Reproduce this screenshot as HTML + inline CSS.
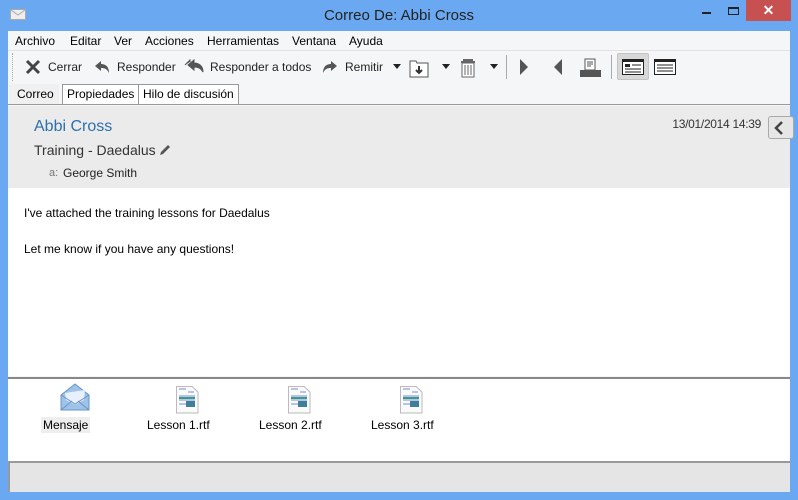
<!DOCTYPE html>
<html><head><meta charset="utf-8"><style>
*{margin:0;padding:0;box-sizing:border-box}
body{width:798px;height:500px;background:#6aa9f2;font-family:"Liberation Sans",sans-serif;font-size:12px;color:#000;position:relative;overflow:hidden}
.abs{position:absolute}
.title{left:0;top:0;width:798px;height:31px;text-align:center;font-size:15px;line-height:31px;color:#222}
.client{left:8px;top:31px;width:782px;height:461px;background:#f5f6f7}
.menu span{position:absolute;top:3px;font-size:12px}
.tb{font-size:12px;color:#222}
.tab{border:1px solid #999;border-bottom:none;background:#fff;height:20px;top:84px;font-size:12px;line-height:19px;padding:0 4px;white-space:nowrap}
</style></head><body>
<div class="abs title">Correo De: Abbi Cross</div>
<svg class="abs" style="left:10px;top:9px" width="16" height="12"><rect x="0.5" y="0.5" width="15" height="10" fill="#eee" stroke="#aaa"/><path d="M1 1 L8 6 L15 1" stroke="#aaa" fill="none"/></svg>
<div class="abs" style="left:702px;top:12px;width:9px;height:2px;background:#222"></div>
<div class="abs" style="left:728px;top:7px;width:11px;height:8px;border:1px solid #222;border-top-width:2px"></div>
<div class="abs" style="left:746px;top:0;width:45px;height:21px;background:#c75050;color:#fff;text-align:center;font-size:14px;line-height:21px;font-weight:bold">✕</div>
<div class="abs client"></div>
<div class="abs menu" style="left:8px;top:31px;width:782px;height:19px">
<span style="left:7px">Archivo</span><span style="left:62px">Editar</span><span style="left:106px">Ver</span><span style="left:137px">Acciones</span><span style="left:199px">Herramientas</span><span style="left:284px">Ventana</span><span style="left:341px">Ayuda</span></div>
<div class="abs" style="left:8px;top:50px;width:782px;height:1px;background:#e2e2e2"></div>
<div class="abs" style="left:12px;top:53px;width:1px;height:28px;border-left:1px dotted #aaa"></div>
<svg class="abs" style="left:25px;top:59px" width="16" height="16"><path d="M2 2L14 14M14 2L2 14" stroke="#444" stroke-width="3"/></svg>
<div class="abs tb" style="left:48px;top:60px">Cerrar</div>
<svg class="abs" style="left:94px;top:59px" width="16" height="16"><path d="M1 7L7 2V5C12 5 15 8 15 14C13 10 11 9 7 9V12Z" fill="#555"/></svg>
<div class="abs tb" style="left:117px;top:60px">Responder</div>
<svg class="abs" style="left:184px;top:58px" width="22" height="16"><path d="M1 7L6 2V4M4 7L10 2V5C15 5 19 8 19 14C17 10 14 9 10 9V12Z" fill="#555" stroke="#555"/></svg>
<div class="abs tb" style="left:210px;top:60px">Responder a todos</div>
<svg class="abs" style="left:322px;top:59px" width="16" height="16"><path d="M15 7L9 2V5C4 5 1 8 1 14C3 10 5 9 9 9V12Z" fill="#555"/></svg>
<div class="abs tb" style="left:345px;top:60px">Remitir</div>
<svg class="abs" style="left:393px;top:64px" width="8" height="5"><path d="M0 0H8L4 5Z" fill="#222"/></svg>
<svg class="abs" style="left:409px;top:58px" width="20" height="20"><path d="M1 3H7L8 5H19V19H1Z" fill="#fff" stroke="#555"/><path d="M10 8V15M7 12L10 15L13 12" stroke="#333" stroke-width="2" fill="none"/></svg>
<svg class="abs" style="left:442px;top:64px" width="8" height="5"><path d="M0 0H8L4 5Z" fill="#222"/></svg>
<svg class="abs" style="left:460px;top:58px" width="16" height="20"><rect x="3" y="1" width="10" height="2" fill="#666"/><rect x="1" y="3" width="14" height="2" fill="#666"/><path d="M2 5H14V19H2Z" fill="#fff" stroke="#666"/><path d="M5 7V17M8 7V17M11 7V17" stroke="#666"/></svg>
<svg class="abs" style="left:490px;top:64px" width="8" height="5"><path d="M0 0H8L4 5Z" fill="#222"/></svg>
<div class="abs" style="left:506px;top:55px;width:1px;height:24px;background:#aaa"></div>
<svg class="abs" style="left:519px;top:59px" width="10" height="17"><path d="M1 0L9 8L1 16Z" fill="#555"/></svg>
<svg class="abs" style="left:553px;top:59px" width="10" height="17"><path d="M9 0L1 8L9 16Z" fill="#555"/></svg>
<svg class="abs" style="left:580px;top:58px" width="21" height="20"><path d="M5 1H15V12H5Z" fill="#fff" stroke="#555"/><path d="M7 4H13M7 6H13M7 8H11" stroke="#555"/><rect x="0" y="12" width="21" height="7" fill="#555"/></svg>
<div class="abs" style="left:611px;top:55px;width:1px;height:24px;background:#aaa"></div>
<div class="abs" style="left:617px;top:53px;width:32px;height:27px;background:#d8d8d8;border:1px solid #c4c4c4;border-radius:2px"></div>
<svg class="abs" style="left:622px;top:59px" width="22" height="16"><rect x="0.5" y="0.5" width="21" height="15" fill="#fff" stroke="#222"/><rect x="0" y="0" width="22" height="3" fill="#222"/><rect x="3" y="5" width="5" height="3" fill="#222"/><path d="M10 6H19M3 10H19M3 13H19" stroke="#222"/></svg>
<svg class="abs" style="left:654px;top:59px" width="22" height="16"><rect x="0.5" y="0.5" width="21" height="15" fill="#fff" stroke="#222"/><rect x="0" y="0" width="22" height="3" fill="#222"/><path d="M3 6H19M3 9H19M3 12H19" stroke="#222"/></svg>
<div class="abs" style="left:8px;top:104px;width:782px;height:1px;background:#999"></div>
<div class="abs tab" style="left:9px;background:#f0f0f0;border-color:#f0f0f0;padding-left:7px">Correo</div>
<div class="abs tab" style="left:62px">Propiedades</div>
<div class="abs tab" style="left:138px">Hilo de discusión</div>
<div class="abs" style="left:8px;top:106px;width:782px;height:82px;background:#ebebeb"></div>
<div class="abs" style="left:34px;top:118px;font-size:16px;color:#2e6fae">Abbi Cross</div>
<div class="abs" style="left:34px;top:142px;font-size:14px;color:#333">Training - Daedalus</div>
<svg class="abs" style="left:158px;top:143px" width="14" height="14"><path d="M2 12L3 9L10 2L12 4L5 11Z" fill="#555"/></svg>
<div class="abs" style="left:49px;top:167px;font-size:11px;color:#777">a:</div>
<div class="abs" style="left:63px;top:166px;font-size:12px;color:#222">George Smith</div>
<div class="abs" style="right:37px;top:117px;font-size:12px;color:#333;letter-spacing:-0.3px">13/01/2014 14:39</div>
<div class="abs" style="left:768px;top:116px;width:26px;height:23px;background:#e6e6e6;border:1px solid #aaa;border-radius:3px"></div>
<svg class="abs" style="left:774px;top:121px" width="10" height="14"><path d="M8 1L2 7L8 13" stroke="#444" stroke-width="2.5" fill="none"/></svg>
<div class="abs" style="left:8px;top:188px;width:782px;height:188px;background:#fff"></div>
<div class="abs" style="left:24px;top:206px;font-size:12px">I've attached the training lessons for Daedalus</div>
<div class="abs" style="left:24px;top:242px;font-size:12px">Let me know if you have any questions!</div>
<div class="abs" style="left:8px;top:377px;width:782px;height:2px;background:#888"></div>
<div class="abs" style="left:8px;top:379px;width:782px;height:82px;background:#fff"></div>
<div class="abs" style="left:8px;top:461px;width:782px;height:2px;background:#999"></div>
<svg class="abs" style="left:60px;top:382px" width="30" height="30"><path d="M1 13L15 2L29 13V28H1Z" fill="#9ec3ea" stroke="#6a95c2"/><path d="M5 11L25 8L24 18L15 23L6 18Z" fill="#e8f1fb"/><path d="M1 28L12 19M29 28L18 19M1 13L15 22L29 13" stroke="#6a95c2" fill="none"/></svg>
<div class="abs" style="left:41px;top:417px;width:49px;height:16px;background:#eee"></div>
<div class="abs" style="left:43px;top:418px;font-size:12px">Mensaje</div>
<div class="abs" style="left:147px;top:418px;font-size:12px">Lesson 1.rtf</div>
<div class="abs" style="left:259px;top:418px;font-size:12px">Lesson 2.rtf</div>
<div class="abs" style="left:371px;top:418px;font-size:12px">Lesson 3.rtf</div>
<svg class="abs" style="left:176px;top:386px" width="24" height="28"><path d="M0.5 0.5H16L22 6V27H0.5Z" fill="#fafafa" stroke="#bbb"/><path d="M3 3H10M12 6H18M3 10H19M3 14H19M3 18H19" stroke="#7a8bd8"/><path d="M3 12H19" stroke="#3a9a8a" stroke-width="2"/><rect x="10" y="15" width="9" height="6" fill="#3e7f99"/></svg>
<svg class="abs" style="left:288px;top:386px" width="24" height="28"><path d="M0.5 0.5H16L22 6V27H0.5Z" fill="#fafafa" stroke="#bbb"/><path d="M3 3H10M12 6H18M3 10H19M3 14H19M3 18H19" stroke="#7a8bd8"/><path d="M3 12H19" stroke="#3a9a8a" stroke-width="2"/><rect x="10" y="15" width="9" height="6" fill="#3e7f99"/></svg>
<svg class="abs" style="left:400px;top:386px" width="24" height="28"><path d="M0.5 0.5H16L22 6V27H0.5Z" fill="#fafafa" stroke="#bbb"/><path d="M3 3H10M12 6H18M3 10H19M3 14H19M3 18H19" stroke="#7a8bd8"/><path d="M3 12H19" stroke="#3a9a8a" stroke-width="2"/><rect x="10" y="15" width="9" height="6" fill="#3e7f99"/></svg>
<div class="abs" style="left:8px;top:463px;width:782px;height:29px;background:#e5e5e5;border-left:2px solid #999"></div>
</body></html>
